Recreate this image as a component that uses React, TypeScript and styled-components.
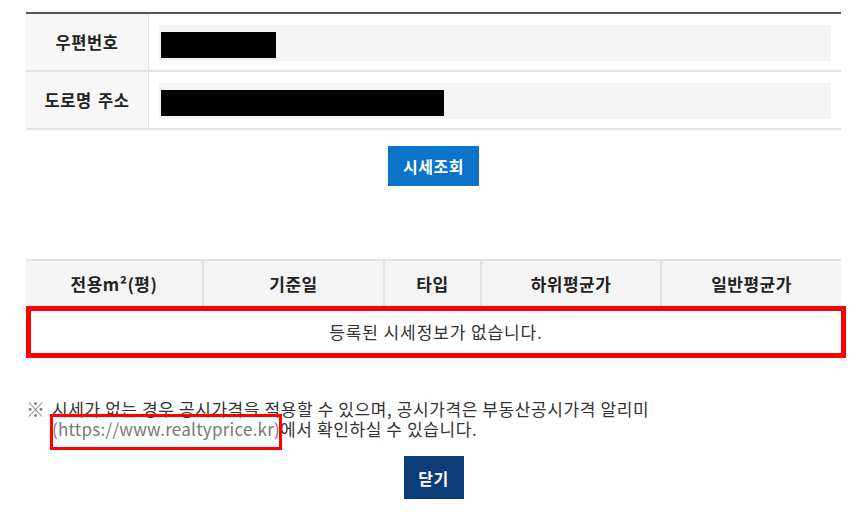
import React from "react";
import styled, { createGlobalStyle } from "styled-components";

const Global = createGlobalStyle`
  html, body { margin: 0; padding: 0; background: #fff; }
  body { font-family: "Noto Sans CJK KR", "Noto Sans", sans-serif; color: #333; }
  * { box-sizing: border-box; }
`;

const Page = styled.div`
  width: 860px;
  padding: 12px 19px 0 26px;
`;

const InfoTable = styled.div`
  border-top: 2px solid #555;
`;

const InfoRow = styled.div`
  display: grid;
  grid-template-columns: 123px 1fr;
  height: ${(p: { $h: number }) => p.$h}px;
  border-bottom: 2px solid #e3e3e3;
`;

const Label = styled.div`
  display: flex;
  align-items: center;
  justify-content: center;
  background: #f7f7f7;
  border-right: 1px solid #e3e3e3;
  font-size: 16.5px;
  font-weight: 700;
  color: #222;
  letter-spacing: 0.6px;
  word-spacing: 2px;
`;

const ValueCell = styled.div`
  display: flex;
  align-items: center;
  padding: 2px 10px 0 10px;
`;

const InputBox = styled.div`
  width: 100%;
  height: 36px;
  background: #f4f4f4;
  padding: 7px 0 3px 2px;
`;

const Redact = styled.span<{ $w: number }>`
  display: block;
  width: ${(p) => p.$w}px;
  height: 26px;
  background: #000;
`;

const Center = styled.div<{ $mt: number }>`
  display: flex;
  justify-content: center;
  margin-top: ${(p) => p.$mt}px;
`;

const Button = styled.button<{ $bg: string; $w: number; $h: number }>`
  width: ${(p) => p.$w}px;
  height: ${(p) => p.$h}px;
  background: ${(p) => p.$bg};
  border: none;
  color: #fff;
  font-family: "Noto Sans CJK KR", sans-serif;
  font-size: 16px;
  font-weight: 700;
  letter-spacing: 0.5px;
  padding: 0;
  cursor: pointer;
`;

const PriceTable = styled.div`
  margin-top: 73px;
`;

const HeadRow = styled.div`
  display: grid;
  grid-template-columns: 178px 181px 97px 180px 179px;
  height: 47px;
  background: #f4f4f4;
  border-top: 2px solid #e3e3e3;
`;

const HeadCell = styled.div<{ $last?: boolean }>`
  display: flex;
  align-items: center;
  justify-content: center;
  border-right: ${(p) => (p.$last ? "none" : "2px solid #e3e3e3")};
  font-size: 17px;
  font-weight: 700;
  color: #222;
  letter-spacing: 0.5px;
`;

const EmptyRow = styled.div`
  width: 820px;
  height: 52px;
  border: 5px solid #ff0000;
  display: flex;
  align-items: center;
  justify-content: center;
  font-size: 17px;
  color: #333;
  letter-spacing: 0.9px;
  padding-bottom: 1px;
`;

const Notice = styled.div`
  display: flex;
  margin-top: 41px;
  font-size: 17px;
  line-height: 20px;
  color: #333;
  letter-spacing: 0.6px;
`;

const Mark = styled.span`
  width: 26px;
  flex: none;
  color: #777;
  font-size: 19px;
  letter-spacing: 0;
`;

const NoticeLine = styled.div`
  height: 20px;
  white-space: nowrap;
`;

const LinkText = styled.span`
  position: relative;
  color: #777;
  letter-spacing: 0.25px;
  &::after {
    content: "";
    position: absolute;
    left: -2px;
    right: -2px;
    top: -2px;
    bottom: -9px;
    border: 3px solid #ff0000;
  }
`;

const heads = ["전용m²(평)", "기준일", "타입", "하위평균가", "일반평균가"];

export default function App() {
  return (
    <Page>
      <Global />
      <InfoTable>
        <InfoRow $h={58}>
          <Label>우편번호</Label>
          <ValueCell>
            <InputBox>
              <Redact $w={115} />
            </InputBox>
          </ValueCell>
        </InfoRow>
        <InfoRow $h={58}>
          <Label>도로명 주소</Label>
          <ValueCell>
            <InputBox>
              <Redact $w={283} />
            </InputBox>
          </ValueCell>
        </InfoRow>
      </InfoTable>
      <Center $mt={16}>
        <Button $bg="#0b74c8" $w={91} $h={40}>시세조회</Button>
      </Center>
      <PriceTable>
        <HeadRow>
          {heads.map((h, i) => (
            <HeadCell key={h} $last={i === heads.length - 1}>{h}</HeadCell>
          ))}
        </HeadRow>
        <EmptyRow>등록된 시세정보가 없습니다.</EmptyRow>
      </PriceTable>
      <Notice>
        <Mark>※</Mark>
        <div>
          <NoticeLine>시세가 없는 경우 공시가격을 적용할 수 있으며, 공시가격은 부동산공시가격 알리미</NoticeLine>
          <NoticeLine>
            <LinkText>(https://www.realtyprice.kr)</LinkText>에서 확인하실 수 있습니다.
          </NoticeLine>
        </div>
      </Notice>
      <Center $mt={17}>
        <Button $bg="#0b3c78" $w={60} $h={43}>닫기</Button>
      </Center>
    </Page>
  );
}
